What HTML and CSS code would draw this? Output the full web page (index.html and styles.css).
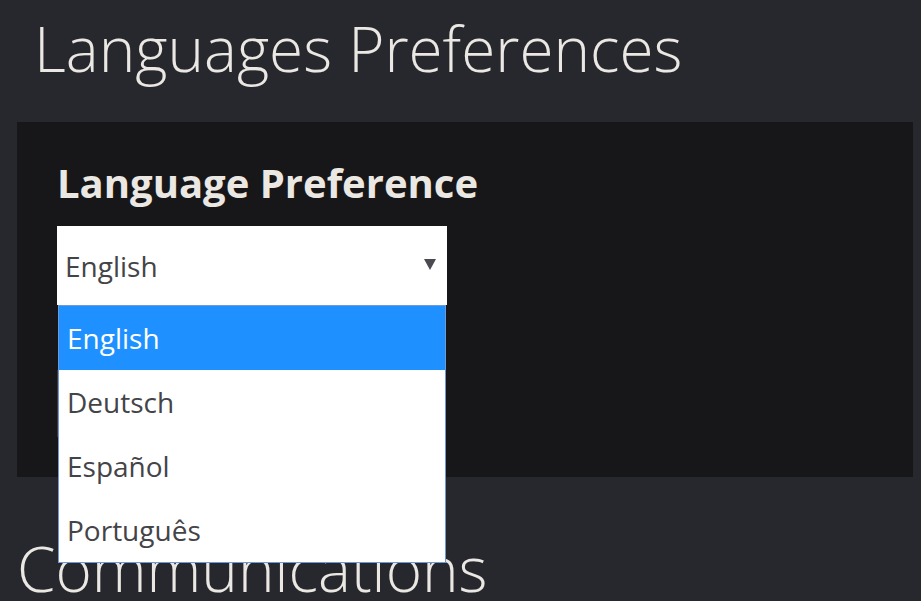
FILE: index.html
```html
<!DOCTYPE html>
<html lang="en">
<head>
  <meta charset="UTF-8">
  <meta name="viewport" content="width=device-width, initial-scale=1.0">
  <title>Languages Preferences</title>
  <link rel="stylesheet" href="styles.css">
</head>
<body>

  <!-- Page title -->
  <h1 class="page-title">Languages Preferences</h1>

  <!-- Language panel -->
  <section class="panel">
    <h2>Language Preference</h2>

    <div class="select-wrap">
      <div class="select">
        <span>English</span>
        <svg class="arrow" width="12" height="11" viewBox="0 0 12 11">
          <path d="M0 0 H12 L6 11 Z" fill="#4a4a50"/>
        </svg>
      </div>

      <!-- Open dropdown list -->
      <ul class="options">
        <li class="selected">English</li>
        <li>Deutsch</li>
        <li>Español</li>
        <li>Português</li>
      </ul>
    </div>

    <div class="save-button"></div>
  </section>

  <h1 class="section-title">Communications</h1>

</body>
</html>
```

FILE: styles.css
```css
/* Base */
html, body {
  height: 100%;
  overflow: hidden;
}

body {
  margin: 0;
  padding: 0;
  background-color: #27282e;
  color: #ebe8e3;
  font-family: 'Open Sans', 'Liberation Sans', sans-serif;
}

h1 {
  font-size: 62px;
  font-weight: 300;
  line-height: 1.2;
  margin: 0;
}

.page-title {
  padding: 11px 0 0 34px;
  margin-bottom: 37px;
}

.section-title {
  padding-left: 17px;
  margin-top: 54px;
}

/* Panel */
.panel {
  background-color: #171719;
  margin: 0 8px 0 17px;
  padding: 0 41px 0 40px;
  height: 355px;
  display: flex;
  flex-direction: column;
  align-items: flex-start;
}

.panel h2 {
  font-size: 40px;
  font-weight: 700;
  line-height: 1.2;
  margin: 37px 0 19px;
}

/* Select */
.select-wrap {
  position: relative;
  width: 390px;
}

.select {
  background-color: #fff;
  height: 79px;
  display: flex;
  align-items: center;
  justify-content: space-between;
  padding: 0 11px 0 8px;
  box-sizing: border-box;
  color: #444448;
  font-size: 28px;
}

.arrow {
  margin-top: -2px;
}

.options {
  position: absolute;
  top: 79px;
  left: 1px;
  width: 388px;
  box-sizing: border-box;
  margin: 0;
  padding: 0;
  list-style: none;
  background-color: #fff;
  border: 1px solid #6f98d8;
  z-index: 10;
}

.options li {
  height: 64px;
  line-height: 64px;
  padding-left: 8px;
  font-size: 28px;
  color: #444448;
}

.options li.selected {
  background-color: #1e90ff;
  color: #fff;
}

.save-button {
  margin-top: 65px;
  width: 160px;
  height: 67px;
  border: 1px solid #3a3b40;
  box-sizing: border-box;
}
```
